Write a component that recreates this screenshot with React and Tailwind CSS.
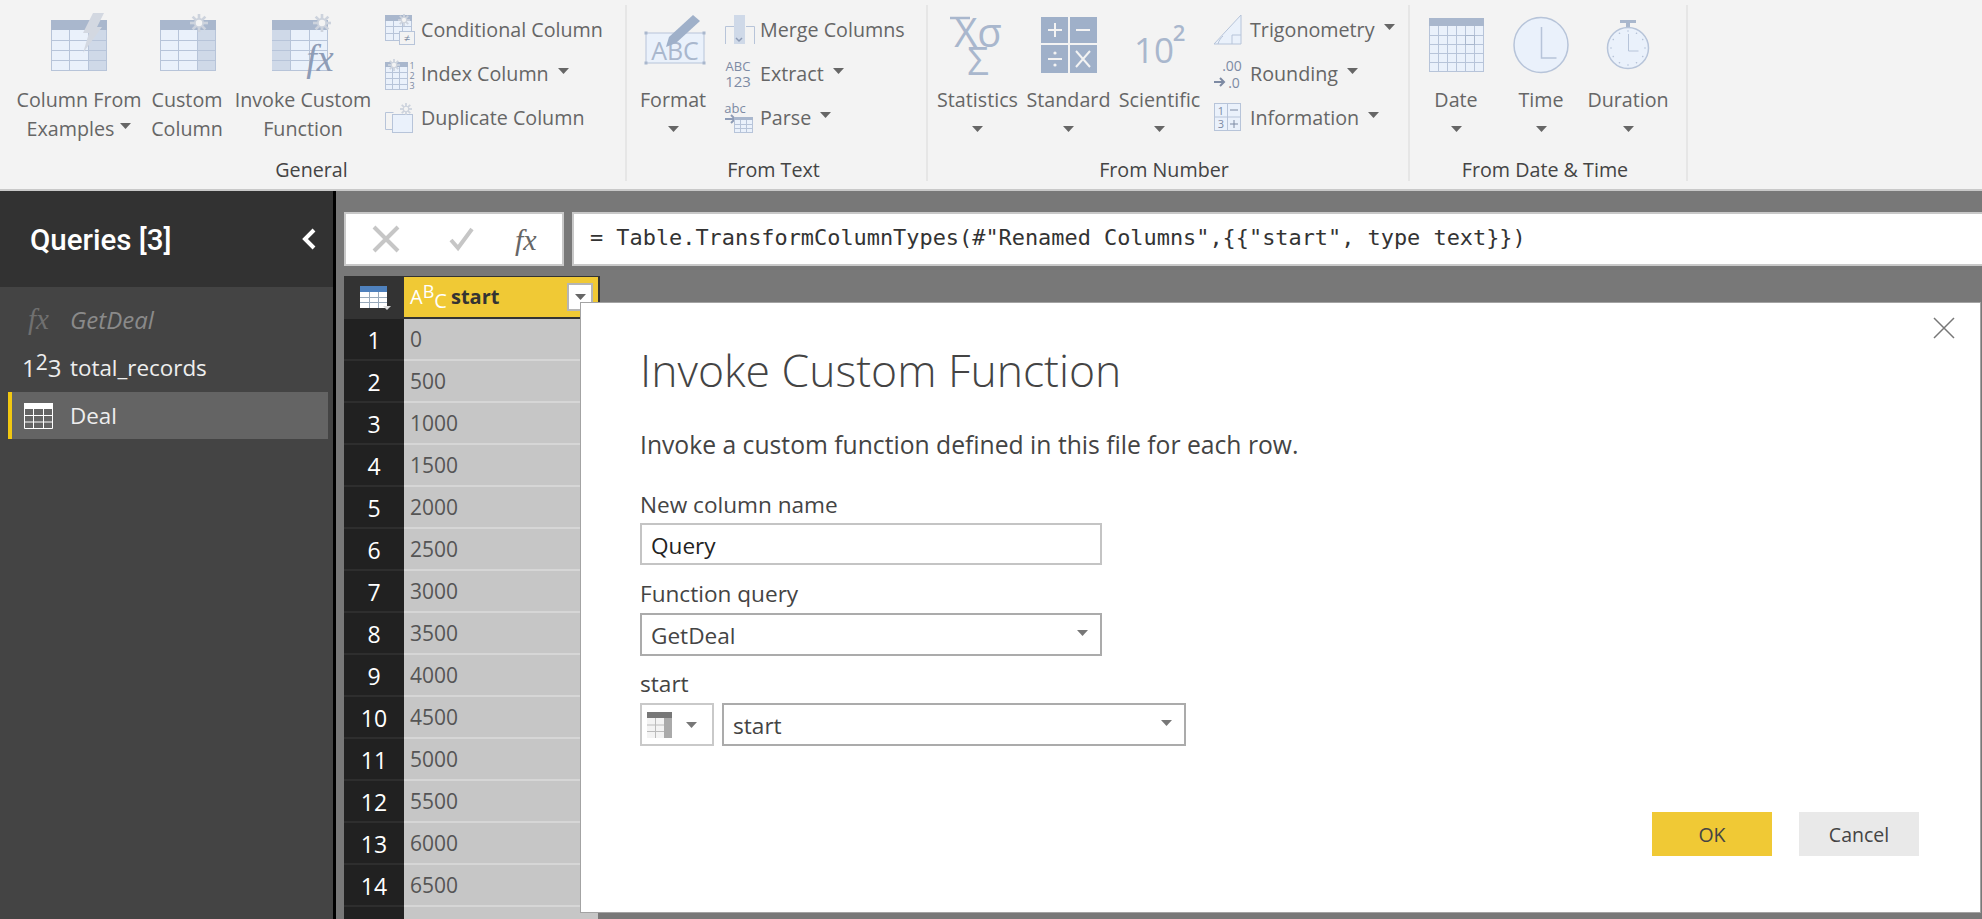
const HEAD = '#a9b7cd';
const FILL = '#cfd9e8';
const PALE = '#eaf1fb';
const LINE = '#b7c4d9';
const GEAR = '#cdd3dd';

const rows = ['0', '500', '1000', '1500', '2000', '2500', '3000', '3500', '4000', '4500', '5000', '5500', '6000', '6500', ''];

function Caret({ className = '', color = '#666' }) {
    return (
        <svg width="11" height="6" viewBox="0 0 11 6" className={className}>
            <path d="M0 0h11L5.5 6z" fill={color} />
        </svg>
    );
}

function Gear({ cx, cy, r }) {
    const spokes = [0, 45, 90, 135];
    return (
        <g stroke={GEAR} strokeWidth={r / 3.4}>
            {spokes.map((a) => (
                <line key={a} x1={cx} y1={cy - r} x2={cx} y2={cy + r} transform={`rotate(${a} ${cx} ${cy})`} />
            ))}
            <circle cx={cx} cy={cy} r={r / 2.2} fill="#f3f3f3" strokeWidth={r / 5} />
        </g>
    );
}

// table drawing used by most of the column icons
function Table({ x, y, w, h, head = 10, colX, colW, xs = [], ys = [] }) {
    return (
        <g>
            <rect x={x + 0.5} y={y + 0.5} width={w} height={h} fill={PALE} stroke={LINE} />
            {colW && <rect x={colX} y={y} width={colW} height={h} fill={FILL} />}
            <rect x={x} y={y} width={w + 1} height={head} fill={HEAD} />
            {xs.map((v) => <line key={v} x1={v + 0.5} x2={v + 0.5} y1={y + head} y2={y + h} stroke={LINE} />)}
            {ys.map((v) => <line key={v} y1={v + 0.5} y2={v + 0.5} x1={x} x2={x + w} stroke={LINE} />)}
        </g>
    );
}

function Big({ children }) {
    return <svg width="80" height="64" viewBox="0 0 80 64" className="block overflow-visible">{children}</svg>;
}

const iconFromExamples = (
    <Big>
        <Table x={12} y={7} w={55} h={50} colX={49} colW={18} xs={[30, 49]} ys={[27, 37, 47]} />
        <path d="M54 0h11l-7 14h5L44 40l6-20h-6z" fill="#d3d8e1" />
    </Big>
);
const iconCustom = (
    <Big>
        <Table x={13} y={7} w={55} h={50} colX={50} colW={18} xs={[31, 50]} ys={[27, 37, 47]} />
        <Gear cx={52} cy={10} r={9} />
    </Big>
);
const iconInvoke = (
    <Big>
        <Table x={9} y={7} w={55} h={50} colX={9} colW={18} xs={[27, 46]} ys={[27, 37, 47]} />
        <Gear cx={59} cy={10} r={9} />
        <text x={57} y={58} textAnchor="middle" fontFamily="Liberation Serif" fontStyle="italic" fontSize="38" fill="#8e9cb6">fx</text>
    </Big>
);
const iconFormat = (
    <Big>
        <rect x={13} y={20} width={58} height={30} fill={PALE} stroke={LINE} />
        {[[13, 20], [71, 20], [13, 50], [71, 50]].map(([x, y]) => <rect key={x + '' + y} x={x - 1.5} y={y - 1.5} width="3" height="3" fill={HEAD} />)}
        <text x={42} y={47} textAnchor="middle" fontFamily="Open Sans" fontSize="25" fill={HEAD}>ABC</text>
        <path d="M33 34l3-10 24-22 7 6-24 22z" fill="#9fb0c9" />
    </Big>
);
const iconStats = (
    <Big>
        <line x1={12} x2={32} y1={5} y2={5} stroke={HEAD} strokeWidth="2.5" />
        <text x={40} y={34} textAnchor="middle" fontFamily="Open Sans" fontSize="40" fill={HEAD}>Xσ</text>
        <text x={40} y={62} textAnchor="middle" fontFamily="Open Sans" fontSize="38" fill={HEAD}>Σ</text>
    </Big>
);
const iconStandard = (
    <Big>
        <rect x={12} y={4} width={56} height={56} fill="#9fb0c9" />
        <path d="M39 4h2v56h-2zM12 30h56v2H12z" fill="#f3f3f3" />
        <path d="M19 16h14v2H19zM25 10h2v14h-2zM47 16h14v2H47zM19 45h14v2H19z" fill="#f3f3f3" />
        <circle cx="26" cy="40" r="1.6" fill="#f3f3f3" />
        <circle cx="26" cy="52" r="1.6" fill="#f3f3f3" />
        <path d="M47 38l14 16M61 38L47 54" stroke="#f3f3f3" strokeWidth="2" />
    </Big>
);
const iconScientific = (
    <Big>
        <text x={34} y={50} textAnchor="middle" fontFamily="Open Sans" fontWeight="500" fontSize="35" fill={HEAD}>10</text>
        <text x={59} y={28} textAnchor="middle" fontFamily="Open Sans" fontWeight="600" fontSize="22" fill={HEAD}>2</text>
    </Big>
);
const iconDate = (
    <Big>
        <Table x={13} y={5} w={54} h={53} head={8} xs={[22, 31, 40, 49, 58]} ys={[22, 31, 40, 49]} />
        <rect x={49.5} y={22.5} width={9} height={9} fill="none" stroke={HEAD} />
    </Big>
);
const iconTime = (
    <Big>
        <ellipse cx={40} cy={32} rx={27} ry={27.5} fill={PALE} stroke={LINE} strokeWidth="1.5" />
        <path d="M40.5 14v31h15" fill="none" stroke={LINE} strokeWidth="1.5" />
    </Big>
);
const iconDuration = (
    <Big>
        <path d="M32 7h16v3h-6v5h-4v-5h-6z" fill={HEAD} />
        <circle cx={40} cy={35} r={20.5} fill={PALE} stroke={LINE} strokeWidth="1.5" />
        <path d="M40.5 21v17h10" fill="none" stroke={LINE} />
        {[0, 30, 60, 90, 120, 150, 180, 210, 240, 270, 300, 330].map((a) => (
            <circle key={a} cx={40} cy={18} r={0.8} fill={LINE} transform={`rotate(${a} 40 35)`} />
        ))}
    </Big>
);

function Small({ children }) {
    return <svg width="32" height="32" viewBox="0 0 32 32" className="block overflow-visible">{children}</svg>;
}

const smConditional = (
    <Small>
        <Table x={1} y={1} w={26} h={25} head={6} xs={[9, 18]} ys={[12, 19]} />
        <Gear cx={20} cy={6} r={6} />
        <rect x={15.5} y={17.5} width={15} height={13} fill="#f3f3f3" stroke={LINE} />
        <text x={23} y={28} textAnchor="middle" fontFamily="Open Sans" fontSize="11" fill="#7d8aa3">≠</text>
    </Small>
);
const smIndex = (
    <Small>
        <Table x={1} y={4} w={22} h={27} head={5} xs={[8, 15]} ys={[14, 20, 26]} />
        <Gear cx={10} cy={7} r={6} />
        <text x={28} y={11} textAnchor="middle" fontFamily="Open Sans" fontSize="9" fill="#7d8aa3">1</text>
        <text x={28} y={21} textAnchor="middle" fontFamily="Open Sans" fontSize="9" fill="#7d8aa3">2</text>
        <text x={28} y={31} textAnchor="middle" fontFamily="Open Sans" fontSize="9" fill="#7d8aa3">3</text>
    </Small>
);
const smDuplicate = (
    <Small>
        <path d="M9.5 10.500H1.500V27.500H9.500" fill="none" stroke={LINE} />
        <rect x={8.5} y={12.5} width={20} height={18} fill={PALE} stroke={LINE} />
        <Gear cx={22} cy={7} r={6} />
    </Small>
);
const smMerge = (
    <Small>
        <path d="M1.500 30V12.500H10M22 12.500h8.500V30" fill="none" stroke={LINE} />
        <rect x={10} y={1} width={11} height={29} fill={FILL} />
        <path d="M12 24l3 3 3-3" fill="none" stroke="#8e9cb6" strokeWidth="1.500" />
    </Small>
);
const smExtract = (
    <Small>
        <text x={14} y={13} textAnchor="middle" fontFamily="Open Sans" fontSize="13" fill="#7d8aa3">ABC</text>
        <text x={14} y={29} textAnchor="middle" fontFamily="Open Sans" fontSize="15" fill="#7d8aa3">123</text>
    </Small>
);
const smParse = (
    <Small>
        <text x={11} y={11} textAnchor="middle" fontFamily="Open Sans" fontSize="13" fill="#7d8aa3">abc</text>
        <path d="M1 17h10M7 13l4 4-4 4" fill="none" stroke="#8e9cb6" strokeWidth="2" />
        <Table x={10} y={15} w={18} h={15} head={3} xs={[16, 22]} ys={[22, 26]} />
    </Small>
);
const smTrig = (
    <Small>
        <path d="M1 30L28 1v29z" fill={PALE} stroke={LINE} />
        <path d="M19 30V21h9M5 30c1-4 3-6 5-8" fill="none" stroke={LINE} />
    </Small>
);
const smRounding = (
    <Small>
        <text x={19} y={13} textAnchor="middle" fontFamily="Open Sans" fontSize="14" fill="#7d8aa3">.00</text>
        <path d="M1 24h10M7 20l4 4-4 4" fill="none" stroke="#7d8aa3" strokeWidth="2" />
        <text x={21} y={30} textAnchor="middle" fontFamily="Open Sans" fontSize="14" fill="#7d8aa3">.0</text>
    </Small>
);
const smInformation = (
    <Small>
        <rect x={1.500} y={1.500} width={26} height={27} fill={PALE} stroke={LINE} />
        <path d="M14.500 1.500v27M1.500 15h26" stroke={LINE} />
        <text x={8} y={13} textAnchor="middle" fontFamily="Open Sans" fontSize="11" fill="#7d8aa3">1</text>
        <text x={8} y={26} textAnchor="middle" fontFamily="Open Sans" fontSize="11" fill="#7d8aa3">3</text>
        <path d="M17 8h8M17 22h8M21 18v8" stroke="#7d8aa3" />
    </Small>
);

function BigButton({ width, icon, line1, line2, caret }) {
    return (
        <div className={`flex flex-col items-center pt-[8px] whitespace-nowrap ${width}`}>
            <div className="h-[72px]">{icon}</div>
            <div className="h-[29px] leading-[29px]">{line1}</div>
            <div className="h-[29px] leading-[29px] flex items-center justify-center gap-[6px]">
                {line2}
                {caret && <Caret className={line2 ? 'mb-[6px]' : ''} />}
            </div>
        </div>
    );
}

function SmallRow({ icon, text, caret, iconWidth = 'w-[37px]' }) {
    return (
        <div className="flex items-center h-[44px] whitespace-nowrap">
            <div className={iconWidth}>{icon}</div>
            <span>{text}</span>
            {caret && <Caret className="ml-[9px] mb-[6px]" />}
        </div>
    );
}

function Group({ width, label, labelClass = '', children }) {
    return (
        <div className={`flex flex-col h-[176px] mt-[5px] border-r-2 border-[#e6e6e6] ${width}`}>
            <div className="flex flex-1">{children}</div>
            <div className={`h-[26px] leading-[30px] text-center text-[#444] ${labelClass}`}>{label}</div>
        </div>
    );
}

function Ribbon() {
    return (
        <div className="flex h-[191px] bg-[#f3f3f3] border-b-2 border-[#c9c9c9] text-[19.7px] text-[#666]">
            <Group width="w-[627px]" label="General" labelClass="pr-[2px]">
                <div className="w-[20px]" />
                <BigButton width="w-[118px]" icon={iconFromExamples} line1="Column From" line2="Examples" caret />
                <BigButton width="w-[98px]" icon={iconCustom} line1="Custom" line2="Column" />
                <BigButton width="w-[134px]" icon={iconInvoke} line1="Invoke Custom" line2="Function" />
                <div className="ml-[14px] pt-[3px]">
                    <SmallRow icon={smConditional} text="Conditional Column" />
                    <SmallRow icon={smIndex} text="Index Column" caret />
                    <SmallRow icon={smDuplicate} text="Duplicate Column" />
                </div>
            </Group>
            <Group width="w-[301px]" label="From Text" labelClass="pr-[6px]">
                <BigButton width="w-[92px]" icon={iconFormat} line1="Format" caret />
                <div className="ml-[5px] pt-[3px]">
                    <SmallRow icon={smMerge} text="Merge Columns" iconWidth="w-[36px]" />
                    <SmallRow icon={smExtract} text="Extract" caret iconWidth="w-[36px]" />
                    <SmallRow icon={smParse} text="Parse" caret iconWidth="w-[36px]" />
                </div>
            </Group>
            <Group width="w-[482px]" label="From Number" labelClass="pr-[8px]">
                <div className="w-[4px]" />
                <BigButton width="w-[91px]" icon={iconStats} line1="Statistics" caret />
                <BigButton width="w-[91px]" icon={iconStandard} line1="Standard" caret />
                <BigButton width="w-[91px]" icon={iconScientific} line1="Scientific" caret />
                <div className="ml-[8px] pt-[3px]">
                    <SmallRow icon={smTrig} text="Trigonometry" caret />
                    <SmallRow icon={smRounding} text="Rounding" caret />
                    <SmallRow icon={smInformation} text="Information" caret />
                </div>
            </Group>
            <Group width="w-[278px]" label="From Date & Time" labelClass="pr-[6px]">
                <div className="w-[4px]" />
                <BigButton width="w-[84px]" icon={iconDate} line1="Date" caret />
                <BigButton width="w-[86px]" icon={iconTime} line1="Time" caret />
                <BigButton width="w-[88px]" icon={iconDuration} line1="Duration" caret />
            </Group>
        </div>
    );
}

function Sidebar() {
    return (
        <div className="w-[336px] shrink-0 bg-[#444] border-r-[3px] border-black">
            <div className="h-[96px] bg-[#323232] flex items-center justify-between pl-[30px] pr-[16px] text-white">
                <span className="text-[29.500px] font-medium font-['Roboto'] relative top-[1px]">Queries [3]</span>
                <svg width="16" height="24" viewBox="0 0 16 24">
                    <path d="M13 3L4 12l9 9" fill="none" stroke="#fff" strokeWidth="4" />
                </svg>
            </div>
            <div className="pt-[9px] pr-[5px] pl-[8px] text-[22.400px]">
                <div className="flex items-center h-[48px] text-[#8a8a8a] italic">
                    <span className="w-[62px] pl-[20px] font-['Liberation_Serif'] text-[29px] text-[#707070]">fx</span>
                    <span className="text-[24px]">GetDeal</span>
                </div>
                <div className="flex items-center h-[48px] text-[#eee]">
                    <span className="w-[62px] pl-[14px] text-[24px] leading-none">1<sup className="text-[21px] top-[-7px]">2</sup>3</span>
                    <span>total_records</span>
                </div>
                <div className="flex items-center h-[47px] bg-[#646464] border-l-4 border-[#f2c811] text-[#eee]">
                    <div className="w-[58px] pl-[12px]">
                        <svg width="29" height="26" viewBox="0 0 29 26" className="block">
                            <rect x="0" y="0" width="29" height="6" fill="#fff" />
                            <path d="M.5 6v19.500h28V6M0 12.500h29M0 19h29M9.500 6v20M19.500 6v20" fill="none" stroke="#fff" />
                        </svg>
                    </div>
                    <span>Deal</span>
                </div>
            </div>
        </div>
    );
}

function Grid() {
    return (
        <div className="w-[256px] mt-[10px] text-[21px]">
            <div className="flex h-[43px] bg-[#333] pt-[1px] pb-[2px] pr-[2px]">
                <div className="w-[60px] flex items-center justify-center">
                    <svg width="34" height="30" viewBox="0 0 34 30">
                        <rect x="3" y="4" width="27" height="6" fill="#4f81bd" />
                        <rect x="3" y="10" width="27" height="16" fill="#fff" />
                        <path d="M3 15.500h27M3 20.500h27M12.500 10v16M21.500 10v16" stroke="#9ab" />
                        <path d="M26 24h8l-4 4z" fill="#ddd" />
                    </svg>
                </div>
                <div className="flex-1 bg-[#f0c935] flex items-center pl-[6px] text-[#333]">
                    <span className="inline-block shrink-0 text-white text-[20px] w-[41px] leading-none">A<sup className="text-[18px] top-[-6px]">B</sup><span className="relative top-[4px]">C</span></span>
                    <span className="font-bold text-[20px]">start</span>
                    <div className="ml-auto mr-[5px] w-[26px] h-[28px] bg-white border-2 border-[#b5b5b5] flex items-center justify-center">
                        <Caret color="#666" />
                    </div>
                </div>
            </div>
            {rows.map((value, i) => (
                <div key={i} className="flex h-[42px]">
                    <div className="w-[60px] pt-[2px] bg-[#212121] border-b-2 border-[#2e2e2e] flex items-center justify-center text-white text-[23px]">
                        {value === '' ? '' : i + 1}
                    </div>
                    <div className="flex-1 mr-[2px] pt-[2px] bg-[#c6c6c6] border-b-2 border-[#d6d6d6] flex items-center pl-[6px] text-[#555]">
                        {value}
                    </div>
                </div>
            ))}
        </div>
    );
}

function Select({ width, value }) {
    return (
        <div className={`h-[43px] border-2 border-[#ababab] flex items-center justify-between pl-[9px] pr-[12px] ${width}`}>
            <span className="pt-[2px]">{value}</span>
            <Caret className="mb-[4px]" color="#777" />
        </div>
    );
}

function Dialog() {
    return (
        <div className="absolute left-[244px] top-[111px] w-[1401px] h-[611px] bg-white border border-[#a3a3a3] flex flex-col pl-[59px] pr-[61px] pt-[39px] pb-[56px] text-[#444] text-[22.600px]">
            <svg width="24" height="24" viewBox="0 0 24 24" className="absolute right-[24px] top-[13px]">
                <path d="M2 2l20 20M22 2L2 22" stroke="#777" strokeWidth="1.500" />
            </svg>
            <h1 className="h-[56px] leading-[56px] text-[44.500px] font-light">Invoke Custom Function</h1>
            <p className="mt-[32px] h-[30px] leading-[30px] text-[24.700px]">Invoke a custom function defined in this file for each row.</p>
            <div className="mt-[30px] h-[30px] leading-[30px]">New column name</div>
            <div className="mt-[3px] w-[462px] h-[42px] border-2 border-[#c4c4c4] flex items-center pl-[9px] pt-[3px] text-[#222]">Query</div>
            <div className="mt-[14px] h-[30px] leading-[30px]">Function query</div>
            <div className="mt-[4px]"><Select width="w-[462px]" value="GetDeal" /></div>
            <div className="mt-[13px] h-[30px] leading-[30px]">start</div>
            <div className="mt-[4px] flex gap-[8px]">
                <div className="w-[74px] h-[43px] border-2 border-[#c9c9c9] flex items-center pl-[5px] gap-[14px]">
                    <svg width="25" height="26" viewBox="0 0 25 26" className="block">
                        <rect x="0" y="0" width="25" height="26" fill="#f3f3f3" />
                        <rect x="0" y="0" width="25" height="6" fill="#777" />
                        <rect x="17" y="6" width="8" height="20" fill="#aaa" />
                        <path d="M0 13h17M0 19.500h17M8.500 6v20" stroke="#bbb" />
                    </svg>
                    <Caret color="#777" />
                </div>
                <Select width="w-[464px]" value="start" />
            </div>
            <div className="mt-auto flex justify-end gap-[27px] text-[19.500px]">
                <button className="w-[120px] h-[44px] pt-[2px] bg-[#f0c935] text-[#444]">OK</button>
                <button className="w-[120px] h-[44px] pt-[2px] bg-[#e9e9e9] text-[#444]">Cancel</button>
            </div>
        </div>
    );
}

export default function App() {
    return (
        <div className="h-screen overflow-hidden flex flex-col font-['Open_Sans',sans-serif]">
            <Ribbon />
            <div className="flex flex-1 min-h-0">
                <Sidebar />
                <div className="relative flex-1 bg-[#787878] pl-[8px] pt-[21px]">
                    <div className="flex gap-[8px] h-[54px]">
                        <div className="w-[220px] bg-white border-2 border-[#c8c8c8] flex items-center">
                            <svg width="40" height="30" viewBox="0 0 40 30" className="ml-[22px]">
                                <path d="M6 3l24 24M30 3L6 27" stroke="#c6c6c6" strokeWidth="4" />
                            </svg>
                            <svg width="30" height="26" viewBox="0 0 30 26" className="ml-[39px]">
                                <path d="M4 14l7 8L25 3" fill="none" stroke="#c6c6c6" strokeWidth="4" />
                            </svg>
                            <span className="ml-[38px] font-['Liberation_Serif'] italic text-[30px] text-[#666]">fx</span>
                        </div>
                        <div className="flex-1 bg-white border-2 border-r-0 border-[#c8c8c8] flex items-center pl-[16px] pb-[2px] font-['DejaVu_Sans_Mono'] text-[21.900px] text-[#333] whitespace-pre">
                            {'= Table.TransformColumnTypes(#"Renamed Columns",{{"start", type text}})'}
                        </div>
                    </div>
                    <Grid />
                    <Dialog />
                </div>
            </div>
        </div>
    );
}
